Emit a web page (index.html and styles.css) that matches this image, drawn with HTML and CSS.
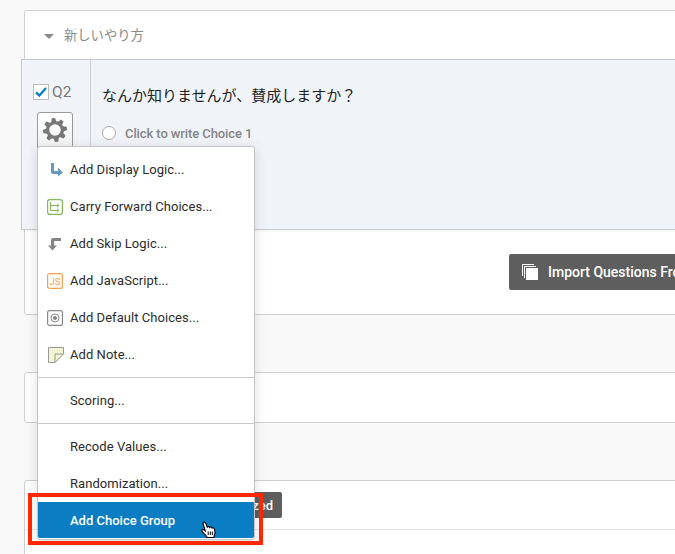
FILE: index.html
```html
<!DOCTYPE html>
<html lang="ja">
<head>
<meta charset="utf-8">
<title>Survey editor</title>
<link rel="stylesheet" href="styles.css">
</head>
<body>
<main class="editor">
  <section class="block first">
    <header class="block-title"><i class="caret"></i><span>新しいやり方</span></header>
    <article class="question">
      <aside class="question-side">
        <div class="question-id">
          <span class="check"><svg width="14" height="14" viewBox="0 0 14 14"><path d="M2 7.3 5.3 10.5 12 3" fill="none" stroke="#0a7fc5" stroke-width="2.3"/></svg></span>
          <span>Q2</span>
        </div>
        <div class="gear">
          <svg width="26" height="26" viewBox="-13 -13 26 26" fill="#777">
            <g transform="rotate(-8)">
              <path id="tooth" d="M-2.6-8 -1.7-12H1.7L2.6-8Z"/>
              <use href="#tooth" transform="rotate(45)"/><use href="#tooth" transform="rotate(90)"/><use href="#tooth" transform="rotate(135)"/><use href="#tooth" transform="rotate(180)"/><use href="#tooth" transform="rotate(225)"/><use href="#tooth" transform="rotate(270)"/><use href="#tooth" transform="rotate(315)"/>
            </g>
            <circle r="7.4" fill="none" stroke="#777" stroke-width="3.2"/>
          </svg>
        </div>
      </aside>
      <div class="question-body">
        <h1>なんか知りませんが、賛成しますか？</h1>
        <div class="choice"><i class="radio"></i><span>Click to write Choice 1</span></div>
      </div>
    </article>
    <footer class="block-actions">
      <div class="button import">
        <svg width="17" height="17" viewBox="0 0 17 17"><path d="M.5 12V.5H12M2.5 14V2.5H14" fill="none" stroke="#fff"/><path d="M4 4h12v12H4z" fill="#fff"/></svg>
        <span>Import Questions From...</span>
      </div>
    </footer>
  </section>
  <section class="block empty"></section>
  <section class="block last"><div class="toolbar"><div class="button random">Randomized</div></div></section>
</main>

<nav class="menu">
  <ul>
    <li><svg width="16" height="16" viewBox="0 0 16 16"><path d="M4 1H7V9H11V5.5L16 10.5 11 14.5V12H6Q4 12 4 10Z" fill="#6799bd"/></svg><span>Add Display Logic...</span></li>
    <li><svg width="16" height="16" viewBox="0 0 16 16" fill="none" stroke="#82b75a"><rect x=".6" y=".6" width="14.8" height="14.8" rx="2.2" stroke-width="1.2"/><path d="M3.5 3V11.5H11M3.5 6.5H11M10 4.7 12 6.5 10 8.3M10 9.7 12 11.5 10 13.3"/></svg><span>Carry Forward Choices...</span></li>
    <li><svg width="16" height="16" viewBox="0 0 16 16"><path d="M14 2V5H7.2V9.5H10L5.5 14.5 1 9.5H4V4Q4 2 6 2Z" fill="#858585"/></svg><span>Add Skip Logic...</span></li>
    <li><svg class="js" width="16" height="16" viewBox="0 0 16 16"><rect x=".6" y=".6" width="14.8" height="14.8" rx="2" fill="none" stroke="#f6a04d" stroke-width="1.2"/><text x="8" y="11.7" text-anchor="middle">JS</text></svg><span>Add JavaScript...</span></li>
    <li><svg width="16" height="16" viewBox="0 0 16 16" fill="none" stroke="#888"><rect x=".6" y=".6" width="14.8" height="14.8" rx="2" stroke-width="1.2"/><circle cx="8" cy="8" r="4"/><circle cx="8" cy="8" r="2" fill="#858585" stroke="none"/></svg><span>Add Default Choices...</span></li>
    <li><svg class="note" width="17" height="17" viewBox="0 0 17 17"><path d="M1.5 1.5H16.5V7.5L8 16.5H1.5Z" fill="#f3f4d2" stroke="#999"/><path d="M8 16.5V8H16.5Z" fill="#f3f4d2" stroke="#999"/></svg><span>Add Note...</span></li>
  </ul>
  <ul><li><span>Scoring...</span></li></ul>
  <ul>
    <li><span>Recode Values...</span></li>
    <li><span>Randomization...</span></li>
    <li class="selected"><span>Add Choice Group</span></li>
  </ul>
</nav>
<div class="highlight"></div>
<svg class="pointer" width="16" height="18" viewBox="0 0 16 18"><path d="M2 2.4C2.4.6 4.3.8 4.8 2.3L6.2 6.2C7.1 5.2 8.3 5.5 8.7 6.5 9.5 5.7 10.7 6 11.1 7.1 12 6.5 13.1 6.9 13.4 8L14 11.1C14.2 13 12.9 13.8 12.9 16.5H6.1C5.5 14.4 2.9 12.7 1 10.4.3 8.9 1.8 8 3.1 9L4.3 10Z" fill="#fff" stroke="#000" stroke-width="1.1"/><path d="M7.2 10.5V14M9.3 10.5V14M11.3 10.5V14" stroke="#000"/></svg>
</body>
</html>
```
FILE: styles.css
```css
* { box-sizing: border-box; }
body {
  margin: 0;
  width: 675px;
  height: 554px;
  overflow: hidden;
  background: #f9f9f9;
  color: #2c2c2c;
  font: 500 13px/16px Roboto, "Noto Sans CJK JP", sans-serif;
}
svg { display: block; flex: none; }
.editor { padding: 10px 0 0 24px; height: 554px; overflow: hidden; }
.block {
  width: 680px;
  background: #fff;
  border: 1px solid #cdd0d2;
  border-radius: 3px;
}
.first { height: 305px; }
.block-title {
  height: 48px;
  display: flex;
  align-items: center;
  gap: 10px;
  padding-left: 19px;
  color: #8b8b8b;
  font: 400 13.3px/20px "Noto Sans CJK JP", sans-serif;
}
.caret { border: 5px solid transparent; border-top-color: #8b8b8b; border-bottom: 0; margin-top: 3px; }
.question {
  display: flex;
  height: 171px;
  margin-left: -4px;
  background: #f0f4f8;
  border: 1px solid #c5cbd0;
  box-shadow: 0 1px 2px #0001;
}
.question-side { width: 69px; border-right: 1px solid #cdd1d4; padding: 22px 0 0 11px; }
.question-id { display: flex; align-items: center; gap: 3px; height: 20px; color: #7b7b7b; font-size: 15.5px; font-weight: 400; }
.check { width: 16px; height: 16px; background: #fff; border: 1px solid #b9bdc0; }
.gear {
  width: 36px;
  height: 40px;
  margin: 10px 0 0 4px;
  padding: 4px;
  background: linear-gradient(#fff, #f1f1f1);
  border: 1px solid #999;
  border-radius: 3px;
}
.question-body { padding: 24px 0 0 11px; }
h1 { margin: 0; color: #222; font: 400 15px/22px "Noto Sans CJK JP", sans-serif; }
.choice { display: flex; align-items: center; gap: 9px; height: 16px; margin-top: 19px; color: #858585; letter-spacing: -.1px; }
.choice span { padding-top: 2px; }
.radio { width: 14px; height: 14px; border: 1px solid #aaa; border-radius: 50%; background: #fff; }
.block-actions { display: flex; justify-content: flex-start; padding: 24px 0 0 484px; }
.button { display: flex; align-items: center; background: #5e5e5e; color: #fff; border-radius: 2px; white-space: nowrap; }
.import { width: 220px; height: 36px; padding-left: 13px; gap: 9px; font-size: 14px; }
.empty { height: 51px; margin-top: 57px; }
.last { height: 90px; margin-top: 57px; }
.toolbar { height: 49px; padding: 11px 0 0 140px; border-bottom: 1px solid #e3e3e3; }
.random { width: 117px; height: 26px; justify-content: flex-end; padding: 2px 9px 0 0; }
.menu {
  position: absolute;
  left: 37px;
  top: 146px;
  width: 218px;
  height: 394px;
  background: #fff;
  border: 1px solid #c5c5c5;
  border-radius: 3px;
  box-shadow: 0 2px 12px #0002;
  font-weight: 400;
  letter-spacing: .05px;
}
ul { list-style: none; margin: 0; padding: 4px 0; }
ul + ul { border-top: 1px solid #c9c9c9; }
li { display: flex; align-items: center; height: 37px; padding-left: 9px; }
li > span { margin-left: 7px; white-space: nowrap; }
li > span:first-child { margin-left: 23px; }
li > .note + span { margin-left: 6px; }
.js text { font: 400 9.5px Roboto, sans-serif; fill: #f6a04d; }
.selected { height: 36px; background: #0a7dc3; color: #fff; font-weight: 500; letter-spacing: 0; border-radius: 0 0 2px 2px; }
.selected span { padding-top: 1px; }
.highlight { position: absolute; left: 28px; top: 493px; width: 235px; height: 52px; border: 4px solid #ff2800; }
.pointer { position: absolute; left: 201px; top: 521px; }
```
